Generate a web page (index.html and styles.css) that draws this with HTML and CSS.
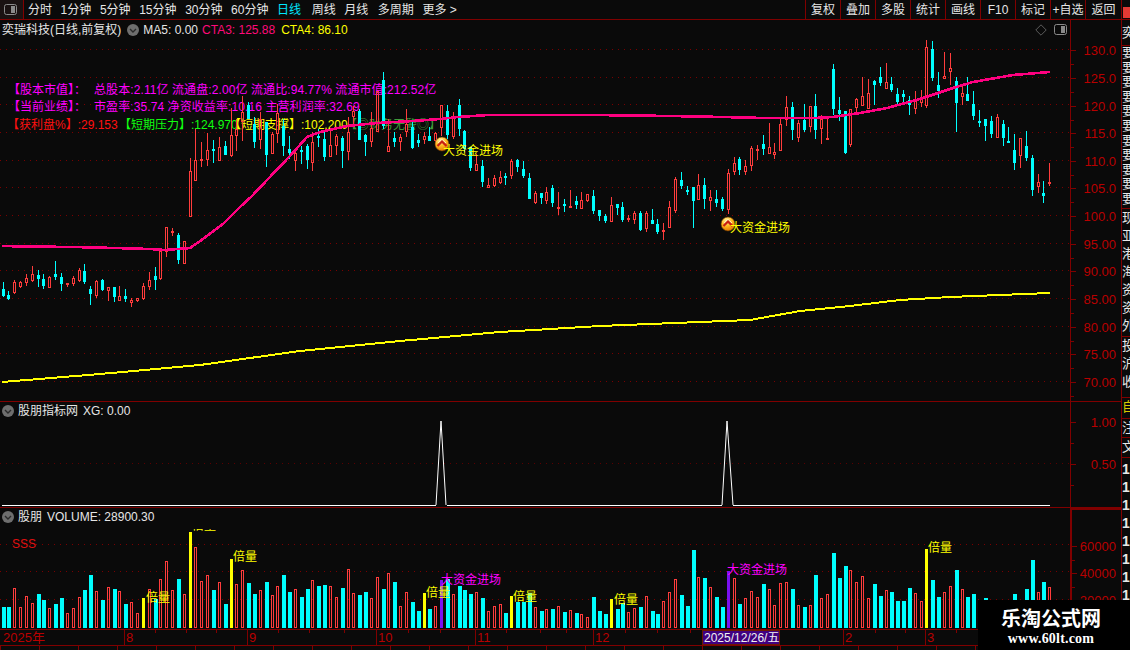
FILE: index.html
```html
<!DOCTYPE html>
<html lang="zh-CN">
<head>
<meta charset="utf-8">
<title>奕瑞科技 日线</title>
<link rel="stylesheet" href="styles.css">
</head>
<body>
<div class="app">
  <header class="toolbar">
    <div class="panel-btn">
      <svg class="panel-icon" viewBox="0 0 13 11"><rect x="0.5" y="0.5" width="12" height="10" rx="2" class="panel-frame"/><rect x="7" y="2" width="4" height="7" class="panel-fill"/></svg>
    </div>
    <nav class="periods">
      <span>分时</span><span>1分钟</span><span>5分钟</span><span>15分钟</span><span>30分钟</span><span>60分钟</span><span class="active">日线</span><span>周线</span><span>月线</span><span>多周期</span><span>更多 &gt;</span>
    </nav>
    <nav class="actions">
      <span>复权</span><span>叠加</span><span>多股</span><span>统计</span><span>画线</span><span>F10</span><span>标记</span><span>+自选</span><span>返回</span>
    </nav>
    <div class="chip-cell"><i class="chip"></i></div>
  </header>

  <div class="workspace">
    <div class="charts">
      <section class="row row-main">
        <div class="plot">
          <div class="legend">
            <span class="name">奕瑞科技(日线,前复权)</span>
            <svg class="drop" viewBox="0 0 12 12"><circle cx="6" cy="6" r="6" class="drop-bg"/><path d="M3 5l3 3 3-3" class="drop-mark"/></svg>
            <span class="l-ma">MA5: 0.00</span>
            <span class="l-cta3">CTA3: 125.88</span>
            <span class="l-cta4">CTA4: 86.10</span>
            <span class="tools">
              <svg class="diamond" viewBox="0 0 12 12"><path d="M6 .8L11.2 6 6 11.2 .8 6z"/></svg>
              <svg class="panel-icon" viewBox="0 0 13 11"><rect x="0.5" y="0.5" width="12" height="10" rx="2" class="panel-frame"/><rect x="7" y="2" width="4" height="7" class="panel-fill"/></svg>
            </span>
          </div>
          <div class="info">
            <div class="info-row magenta"><span class="info-label">【股本市值】：</span><span class="info-wide">总股本:2.11亿 流通盘:2.00亿 流通比:94.77% 流通市值:212.52亿</span></div>
            <div class="info-row magenta"><span class="info-label">【当前业绩】：</span><span class="info-wide">市盈率:35.74 净资收益率:10.16 主营利润率:32.69</span></div>
            <div class="info-row third">
              <span class="cell-red">【获利盘%】:29.153</span>
              <span class="cell-green">【短期压力】:124.970</span>
              <span class="cell-yellow">【短期支撑】:102.200</span>
              <span class="cell-dim">【◎财务无警◎】</span>
            </div>
          </div>
          <svg id="main-chart" class="canvas" viewBox="0 20 1070 382"></svg>
        </div>
        <div class="axis axis-main">
          <div class="tick">130.0</div><div class="tick">125.0</div><div class="tick">120.0</div><div class="tick">115.0</div><div class="tick">110.0</div><div class="tick">105.0</div><div class="tick">100.0</div><div class="tick">95.00</div><div class="tick">90.00</div><div class="tick">85.00</div><div class="tick">80.00</div><div class="tick">75.00</div><div class="tick">70.00</div>
        </div>
      </section>

      <section class="row row-ind">
        <div class="plot">
          <div class="legend legend-sub">
            <svg class="drop first" viewBox="0 0 12 12"><circle cx="6" cy="6" r="6" class="drop-bg"/><path d="M3 5l3 3 3-3" class="drop-mark"/></svg>
            <span class="name">股朋指标网</span>
            <span class="l-white">XG: 0.00</span>
          </div>
          <svg id="ind-chart" class="canvas" viewBox="0 403 1070 105"></svg>
        </div>
        <div class="axis axis-ind">
          <div class="tick tick-ind">1.00</div><div class="tick tick-ind">0.50</div>
        </div>
      </section>

      <section class="row row-vol">
        <div class="plot">
          <div class="legend legend-sub">
            <svg class="drop first" viewBox="0 0 12 12"><circle cx="6" cy="6" r="6" class="drop-bg"/><path d="M3 5l3 3 3-3" class="drop-mark"/></svg>
            <span class="name">股朋</span>
            <span class="l-white">VOLUME: 28900.30</span>
          </div>
          <svg id="vol-chart" class="vol-canvas" viewBox="0 530 1070 100"></svg>
        </div>
        <div class="axis axis-vol">
          <div class="tick tick-vol">60000</div><div class="tick tick-vol">40000</div><div class="tick tick-vol">20000</div>
        </div>
      </section>

      <section class="row row-date">
        <svg id="date-axis" class="date-canvas" viewBox="0 631 1122 15"></svg>
      </section>
    </div>

    <aside class="strip">
      <div class="strip-group s1"><span>奕</span></div>
      <div class="strip-group s2"><span>要</span><span>要</span><span>要</span><span>要</span><span>要</span><span>要</span><span>要</span><span>要</span><span>要</span><span>要</span><span>要</span></div>
      <div class="strip-group s3"><span>现</span><span>亚</span><span>港</span><span>海</span><span>资</span><span>资</span><span>外</span></div>
      <div class="strip-group s4"><span>投</span><span>沪</span><span>收</span></div>
      <div class="strip-group s5 gold"><span>自</span></div>
      <div class="strip-group s6"><span>注</span></div>
      <div class="strip-group s7"><span>文</span></div>
      <div class="strip-group s8"><b>1</b><b>1</b><b>1</b><b>1</b><b>1</b><b>1</b><b>1</b><b>1</b><b>1</b><b>1</b></div>
    </aside>
  </div>
  <div class="footer-ticks"></div>

  <div class="watermark">
    <div class="wm-title">乐淘公式网</div>
    <div class="wm-url">www.60lt.com</div>
  </div>
</div>
<script src="chart.js"></script>
</body>
</html>
```

FILE: styles.css
```css
* { box-sizing: border-box; }
html, body { margin: 0; padding: 0; }
body {
  width: 1130px;
  height: 650px;
  overflow: hidden;
  background: #0a0a0a;
  color: #e6e6e6;
  font: 12px/1 "Liberation Sans", "Noto Sans CJK SC", sans-serif;
}
.app { position: relative; width: 1130px; height: 650px; overflow: hidden; }

/* toolbar */
.toolbar {
  display: flex;
  height: 20px;
  border-bottom: 1px solid #800000;
  align-items: stretch;
  white-space: nowrap;
}
.panel-btn {
  width: 24px;
  display: flex;
  align-items: center;
  justify-content: center;
  padding-right: 2px;
  border-right: 1px solid #800000;
  background: #1a1212;
}
.panel-icon { width: 13px; height: 11px; display: block; }
.panel-frame { fill: none; stroke: #8a8a8a; }
.panel-fill { fill: #8a8a8a; }
.periods { display: flex; align-items: center; gap: 8.6px; padding-left: 4px; }
.periods .active { color: #00e6ff; margin-right: 2px; }
.periods span:nth-child(9) { margin-right: 1px; }
.actions { display: flex; margin-left: auto; }
.actions span {
  width: 35px;
  display: flex;
  align-items: center;
  justify-content: center;
  border-left: 1px solid #800000;
}
.actions span:last-child { width: 37px; border-right: 1px solid #800000; }
.chip-cell { width: 8px; padding: 7px 0 0 1px; }
.chip { display: block; height: 11px; background: #e23a34; }

/* layout */
.workspace { display: flex; height: 626px; }
.charts { width: 1122px; display: flex; flex-direction: column; border-bottom: 1px solid #800000; }
.row { display: flex; border-bottom: 1px solid #800000; }
.row-main { height: 383px; }
.row-ind { height: 106px; }
.row-vol { height: 122px; }
.row-date { height: 15px; border-bottom: 0; }
.plot { position: relative; width: 1070px; display: flex; flex-direction: column; overflow: hidden; }
.canvas { position: absolute; left: 0; bottom: 0; width: 1070px; height: 100%; display: block; z-index: 1; }
.row-main .canvas { height: 382px; }
.row-ind .canvas { height: 105px; }
.vol-canvas { width: 1070px; height: 100px; display: block; margin-top: auto; flex: none; }
.date-canvas { width: 1122px; height: 15px; display: block; }

/* legends */
.legend {
  position: relative;
  z-index: 2;
  display: flex;
  align-items: center;
  height: 19px;
  padding-left: 2px;
  white-space: nowrap;
  flex: none;
}
.legend-sub { height: 18px; }
.drop { width: 12px; height: 12px; margin-left: 6px; flex: none; }
.drop.first { margin-left: 0; margin-right: 4px; }
.drop-bg { fill: #6e6e6e; }
.drop-mark { fill: none; stroke: #2a2a2a; stroke-width: 1.4; }
.l-ma { margin-left: 4px; }
.l-cta3 { margin-left: 4px; color: #ff0a7a; }
.l-cta4 { margin-left: 6px; color: #ffff00; }
.l-white { margin-left: 5px; }
.tools { margin-left: auto; display: flex; align-items: center; gap: 7px; padding-right: 3px; }
.diamond { width: 12px; height: 12px; }
.diamond path { fill: none; stroke: #5c5c5c; }

/* info block (under the candles) */
.info { position: absolute; left: 8px; top: 61px; z-index: 0; }
.info-row { display: flex; height: 17.5px; align-items: center; white-space: nowrap; }
.magenta { color: #ff00ff; }
.info-label { width: 86px; flex: none; }
.info-wide { letter-spacing: .09px; }
.third span { display: block; flex: none; }
.cell-red { width: 112px; color: #ff1010; margin-left: -1px; }
.cell-green { width: 110px; color: #10ff10; }
.cell-yellow { width: 116px; color: #ffff00; }
.cell-dim { color: #3f9a3a; }

/* axes */
.axis {
  width: 52px;
  border-left: 1px solid #800000;
  border-right: 1px solid #800000;
  color: #b80000;
  font-size: 13px;
  display: flex;
  flex-direction: column;
}
.axis-main { padding-top: 17.2px; }
.axis-ind { padding-top: 7px; }
.axis-vol { border-left: 2px solid #800000; border-top: 2px solid #800000; padding-top: 22.5px; }
.tick {
  position: relative;
  flex: none;
  height: 27.67px;
  line-height: 27.67px;
  text-align: right;
  padding-right: 5px;
}
.tick::before {
  content: "";
  position: absolute;
  left: 0;
  top: 13px;
  width: 5px;
  height: 1px;
  background: #800000;
}
.tick::after {
  content: "";
  position: absolute;
  left: 0;
  top: 27px;
  width: 3px;
  height: 1px;
  background: #800000;
}
.tick-ind { height: 42px; }
.tick-ind::after { top: 34px; }
.tick-vol { height: 27.2px; }

/* right-hand strip, cut by the window edge */
.strip {
  width: 8px;
  overflow: hidden;
  display: flex;
  flex-direction: column;
  font-size: 13px;
  color: #e8e8e8;
}
.strip-group { flex: none; display: flex; flex-direction: column; overflow: hidden; border-bottom: 1px solid #800000; }
.strip-group span { display: block; width: 14px; height: 18px; line-height: 18px; flex: none; }
.strip-group b { display: block; height: 18px; line-height: 18px; flex: none; font-size: 14px; }
.s1 { height: 26px; padding-top: 4px; }
.s2 { height: 163px; }
.s2 span { height: 14.6px; line-height: 14.6px; }
.s3 { height: 128px; }
.s4 { height: 61px; }
.s5 { height: 21px; }
.s6 { height: 19px; }
.s7 { height: 20px; }
.s8 { height: 190px; padding-top: 2px; border-bottom: 0; }
.gold { color: #d8c800; }

.footer-ticks {
  height: 4px;
  background: repeating-linear-gradient(90deg, #800000 0 1px, transparent 1px 39px);
}

/* watermark over the corner */
.watermark {
  position: absolute;
  right: 0;
  bottom: 0;
  width: 152px;
  height: 50px;
  padding-right: 6px;
  background: #000;
  text-align: center;
  color: #fff;
  z-index: 5;
}
.wm-title { font: 700 20px/24px "Noto Sans CJK SC", sans-serif; margin-top: 6px; }
.wm-url { font: 700 14px/16px "Liberation Serif", serif; letter-spacing: .2px; margin-top: 1px; }

/* svg parts */
.grid { stroke: #7a0000; stroke-width: 1; stroke-dasharray: 1 5; shape-rendering: crispEdges; }
.grid-dim { stroke: #5a0000; }
.up { fill: none; stroke: #ff3c3c; stroke-width: 1; shape-rendering: crispEdges; }
.down { fill: #00ffff; stroke: none; shape-rendering: crispEdges; }
.wick-up { stroke: #ff3c3c; stroke-width: 1; shape-rendering: crispEdges; }
.wick-down { stroke: #00ffff; stroke-width: 1; shape-rendering: crispEdges; }
.ma-pink { fill: none; stroke: #ff0080; stroke-width: 2.6; shape-rendering: crispEdges; }
.ma-yellow { fill: none; stroke: #ffff00; stroke-width: 2; shape-rendering: crispEdges; }
.xg { fill: none; stroke: #ffffff; stroke-width: 1; }
.xg-base { stroke: #ffffff; stroke-width: 1; shape-rendering: crispEdges; }
.bar-y { fill: #ffff00; shape-rendering: crispEdges; }
.bar-p { fill: #7a10f0; shape-rendering: crispEdges; }
.mark-text { font: 12px "Liberation Sans", "Noto Sans CJK SC", sans-serif; }
.t-yellow { fill: #ffff00; }
.t-magenta { fill: #ff00ff; }
.t-red { fill: #e01010; }
.date-text { font: 13px "Liberation Sans", "Noto Sans CJK SC", sans-serif; fill: #b80000; }
.date-sel-text { font: 12px "Liberation Sans", "Noto Sans CJK SC", sans-serif; fill: #f0f0f0; }
.date-sel { fill: #400080; stroke: #6a1a00; shape-rendering: crispEdges; }
.date-major { stroke: #800000; shape-rendering: crispEdges; }
.ball-rim { fill: url(#ballGrad); stroke: #5a3000; stroke-width: .6; }
.ball-chev { fill: none; stroke: #c81e14; stroke-width: 2.2; }
.ball-hi { fill: none; stroke: #fff2c0; stroke-width: 1; }
```

FILE: chart.js
```js
// Candles: [kind, high, bodyTop, bodyBottom, low]. Values are read per block: page y = y0 + v / 3.
var blocks = [
  { y0: 170, data: [
    "c 340 360 382 384","c 366 378 390 393","r 334 340 372 374","r 337 340 354 358","r 316 328 342 350",
    "r 292 316 336 339","c 304 319 330 354","c 316 331 352 360","r 322 324 356 358","c 277 316 324 332",
    "c 312 324 345 366","r 343 343 348 354","r 322 328 345 352","r 297 304 336 338","c 286 306 340 345",
    "c 352 361 375 408","r 334 337 380 387","c 330 333 364 366","r 355 355 366 396","c 354 354 384 399",
    "r 351 382 395 396","c 361 382 390 399","r 388 394 401 414","r 388 388 396 399","r 342 351 390 393",
    "r 308 334 354 364","c 294 321 332 363","r 244 247 330 333","r 173 174 248 264","r 177 187 189 201",
    "c 192 198 273 285","r 217 217 285 285"] },
  { y0: 70, data: [
    "r 268 306 443 443","r 180 274 335 335","r 220 270 275 293","r 193 244 272 291","c 213 241 245 282",
    "r 204 235 275 275","c 217 232 257 257","r 118 198 262 265","r 150 180 200 246","r 80 130 160 215",
    "c 100 107 150 150","c 145 165 218 237","r 130 150 213 240","c 160 160 258 293","r 190 196 255 255",
    "r 105 132 195 222","c 150 170 230 260","c 200 240 252 270","r 240 253 275 305","c 230 243 247 285",
    "c 225 232 274 299","r 190 220 283 305","c 180 200 205 235","c 190 210 264 275","r 180 229 263 265",
    "r 195 200 230 257","c 200 207 247 298","r 145 188 250 272","r 110 126 145 175","c 120 126 213 213",
    "c 195 198 218 260","r 130 176 218 235","r 65 65 190 190","c 10 33 170 180","r 150 231 250 250",
    "c 190 207 218 235","r 195 203 218 245","r 120 165 190 205","c 160 175 237 240","c 195 213 222 235",
    "r 190 202 212 225","c 175 201 216 216","r 190 192 215 230"] },
  { y0: 90, data: [
    "r 48 48 118 140","c 48 66 138 150","r 70 85 143 150","c 30 48 120 140","c 123 126 180 190",
    "c 175 175 237 245","r 195 225 245 245","c 213 231 278 294","r 267 289 296 296","r 258 267 291 293",
    "r 246 265 282 285","c 252 262 264 288","r 210 216 261 270","c 210 213 234 249","c 216 240 261 266",
    "c 252 267 330 330","r 306 312 342 345","c 312 312 327 345","r 294 309 335 345","c 288 297 342 354",
    "r 309 354 356 378","c 330 345 351 369","r 303 352 354 354","c 321 336 348 360","r 309 333 359 360",
    "r 315 316 336 339","c 303 321 366 375","c 363 363 381 396","c 375 381 396 402","r 324 348 399 399",
    "c 345 345 357 378","c 339 354 393 399","r 378 387 393 399","r 366 372 393 405","c 366 372 423 426",
    "r 366 372 420 429","c 360 393 405 405","c 390 405 429 435","r 402 423 429 453","r 336 354 417 417",
    "r 264 270 366 372","c 249 273 291 300","c 291 303 309 318","c 294 294 336 417","r 255 288 333 333",
    "c 267 288 330 360","r 303 324 336 366","c 303 330 342 354"] },
  { y0: 35, data: [
    "c 490 496 525 531","r 405 418 528 540","r 369 388 414 423","c 369 376 408 423","r 378 397 414 423",
    "r 336 343 396 411","r 333 346 348 378","c 304 331 345 363","r 267 340 360 360","r 327 355 363 375",
    "r 255 270 351 351","r 186 220 258 276","c 204 219 288 318","r 258 267 312 324","c 210 258 288 294",
    "r 216 217 279 294","c 180 216 288 315","r 243 255 285 330","r 252 313 318 318","c 90 105 225 243",
    "c 189 228 240 261","c 231 231 357 360","r 225 226 333 339","r 192 195 222 240","r 129 186 216 216",
    "r 135 177 225 225","c 138 141 153 213","c 99 129 147 156","r 87 145 165 165","c 129 150 168 174",
    "c 162 180 204 213","c 168 180 189 204","c 186 198 213 243","r 171 198 225 240","r 168 190 206 219",
    "r 18 40 216 222","c 22 45 132 141","c 114 153 171 192","r 54 126 135 135","r 57 102 114 153",
    "c 129 141 207 294","r 150 177 189 213","c 129 180 201 201","c 171 210 246 258","c 228 261 267 279",
    "c 255 255 276 321","c 246 261 300 312","r 240 249 312 312","c 258 270 312 336","c 279 321 327 327",
    "c 300 348 387 408","r 312 313 366 402","c 291 336 372 381","c 363 372 468 486","r 420 444 459 477",
    "c 441 477 486 507","r 387 444 450 456"] }
];

// Volume bars: kind + top, page y = 500 + v / 3. y = yellow, p = purple.
var volumes = ("c324 c324 r267 r324 r292 r312 c285 c303 r327 c315 c297 r342 r327 r294 c273 c228 r276 c303 r264 c270 " +
  "r276 c315 r309 r342 y297 r270 c300 r240 r186 r273 c240 r285 y99 r144 r246 r228 c273 r249 c315 y180 " +
  "r255 r213 c252 c285 r273 c249 r288 r261 c228 c279 r270 c294 c270 r243 c261 c258 r261 r294 c267 r210 " +
  "r282 c288 c279 r297 r234 c270 r222 c249 r321 r279 c309 c336 y282 c330 r321 p243 c240 r285 c261 c273 " +
  "c285 r279 c297 r336 r321 r315 c342 y291 c309 c309 c282 r324 c336 r330 c330 r321 c339 r333 c342 r345 " +
  "r354 c294 c336 c345 y300 c330 c312 r339 r327 c324 r291 c336 c345 r306 r279 r240 c288 c321 c153 r234 " +
  "c237 r264 c294 c324 p216 r237 c315 r297 r276 r294 c255 r270 r318 r252 r249 c270 r318 c324 r318 c228 " +
  "r297 r285 c162 c237 c201 r213 r249 r231 r297 c255 c291 r273 c279 c306 c306 c267 r282 r306 y150 c243 " +
  "c294 r279 r261 c213 r270 c294 c285 c310 c297 r310 c310 r310 c310 c285 r310 c270 c183 r279 c249 r264").split(" ");

var BAR0 = 2.5, STEP = 5.848;
function cx(i) { return Math.round(BAR0 + STEP * i); }
function hline(cls, x1, x2, y) { return '<line class="' + cls + '" x1="' + x1 + '" x2="' + x2 + '" y1="' + y + '" y2="' + y + '"/>'; }
function vline(cls, x, y1, y2) { return y2 > y1 ? '<line class="' + cls + '" x1="' + (x + 0.5) + '" x2="' + (x + 0.5) + '" y1="' + y1 + '" y2="' + y2 + '"/>' : ""; }
function grid(ys, x2, cls) { return ys.map(function (y) { return hline(cls || "grid", 0, x2 || 1070, y + 0.5); }).join(""); }
function text(cls, x, y, s) { return '<text class="' + cls + '" x="' + x + '" y="' + y + '">' + s + "</text>"; }
function poly(cls, pts) { return '<polyline class="' + cls + '" points="' + pts.join(" ") + '"/>'; }

var ball = '<defs><radialGradient id="ballGrad" cx="40%" cy="25%" r="80%">' +
  '<stop offset="0" stop-color="#fff3a0"/><stop offset=".5" stop-color="#ffb81e"/><stop offset="1" stop-color="#e07000"/></radialGradient></defs>';
function marker(x, y) {
  return '<circle class="ball-rim" cx="' + x + '" cy="' + y + '" r="7"/>' +
    '<path class="ball-hi" d="M' + (x - 4) + " " + (y - 1) + "L" + x + " " + (y - 4.5) + "L" + (x + 4) + " " + (y - 1) + '"/>' +
    '<path class="ball-chev" d="M' + (x - 4.5) + " " + (y + 2) + "L" + x + " " + (y - 2.5) + "L" + (x + 4.5) + " " + (y + 2) + '"/>';
}

// main chart
var out = ball;
var gridYs = [];
for (var g = 0; g < 13; g++) gridYs.push(Math.round(51 + g * 27.67) - 1);
out += grid(gridYs);
var idx = 0;
blocks.forEach(function (b) {
  b.data.forEach(function (row) {
    var p = row.split(" ");
    var conv = function (v) { return Math.round(b.y0 + Number(v) / 3); };
    var h = conv(p[1]), t = conv(p[2]), bt = conv(p[3]), l = conv(p[4]);
    var x = cx(idx);
    if (p[0] === "c") {
      out += vline("wick-down", x, h, l);
      out += '<rect class="down" x="' + (x - 1) + '" y="' + t + '" width="3" height="' + Math.max(bt - t, 2) + '"/>';
    } else {
      out += vline("wick-up", x, h, t);
      out += vline("wick-up", x, bt, l);
      out += '<rect class="up" x="' + (x - 0.5) + '" y="' + (t + 0.5) + '" width="2" height="' + Math.max(bt - t - 1, 1) + '"/>';
    }
    idx++;
  });
});
out += poly("ma-pink", ["2,247","27,247.5","73,248","115,249","150,250","165,251","190,249","203,240","223,225","240,208",
  "252,197","268,180","290,157","307,138","320,133","347,127","377,124","413,122","440,120","458,118","488,116",
  "593,116","670,117","723,118","763,119","815,119","833,118","860,114","887,109","920,100","953,89","973,83","1013,76","1050,73"]);
out += poly("ma-yellow", ["2,383","100,375","200,366","300,352","400,342","500,333","600,327","700,323","750,321",
  "800,312","850,307","900,301","950,298","1050,294"]);
out += marker(442, 145) + text("mark-text t-yellow", 443, 156, "大资金进场");
out += marker(728, 225) + text("mark-text t-yellow", 730, 233, "大资金进场");
document.getElementById("main-chart").innerHTML = out;

// indicator
var ind = grid([464], 1070, "grid grid-dim");
ind += poly("xg", ["436,506","441,422","446,506"]) + poly("xg", ["722,506","727,422","733,506"]);
ind += hline("xg-base", 2, 436, 506.5) + hline("xg-base", 447, 722, 506.5) + hline("xg-base", 733, 1050, 506.5);
document.getElementById("ind-chart").innerHTML = ind;

// volume
var vol = grid([545, 572, 600]);
var BASE = 629;
volumes.forEach(function (v, i) {
  var k = v.charAt(0), top = Math.round(500 + Number(v.slice(1)) / 3), x = cx(i) - 1, h = BASE - top;
  if (k === "r") vol += '<rect class="up" x="' + (x + 0.5) + '" y="' + (top + 0.5) + '" width="2" height="' + (h - 1) + '"/>';
  else vol += '<rect class="' + (k === "c" ? "down" : k === "y" ? "bar-y" : "bar-p") + '" x="' + x + '" y="' + top + '" width="' + (k === "c" ? 4 : 3) + '" height="' + h + '"/>';
});
vol += text("mark-text t-red", 12, 549, "SSS");
[[146, 603], [192, 531], [233, 562], [426, 598], [513, 602], [614, 605], [928, 553]].forEach(function (m) {
  vol += text("mark-text t-yellow", m[0], m[1], "倍量");
});
vol += text("mark-text t-magenta", 441, 585, "大资金进场");
vol += text("mark-text t-magenta", 727, 575, "大资金进场");
document.getElementById("vol-chart").innerHTML = vol;

// date axis
var date = "";
[124, 247, 376, 475, 593, 843, 925].forEach(function (x) { date += vline("date-major", x, 631, 646); });
[155, 186, 216, 278, 309, 344, 408, 440, 506, 540, 566, 625, 657, 690, 875, 905, 956, 990, 1025].forEach(function (x) {
  date += vline("date-major", x, 631, 634);
});
[["2025年", 3], ["8", 126], ["9", 249], ["10", 378], ["11", 477], ["12", 595], ["2", 845], ["3", 927]].forEach(function (d) {
  date += text("date-text", d[1], 643, d[0]);
});
date += '<rect class="date-sel" x="702.5" y="631.5" width="77" height="14"/>';
date += text("date-sel-text", 704, 643, "2025/12/26/五");
document.getElementById("date-axis").innerHTML = date;
```
